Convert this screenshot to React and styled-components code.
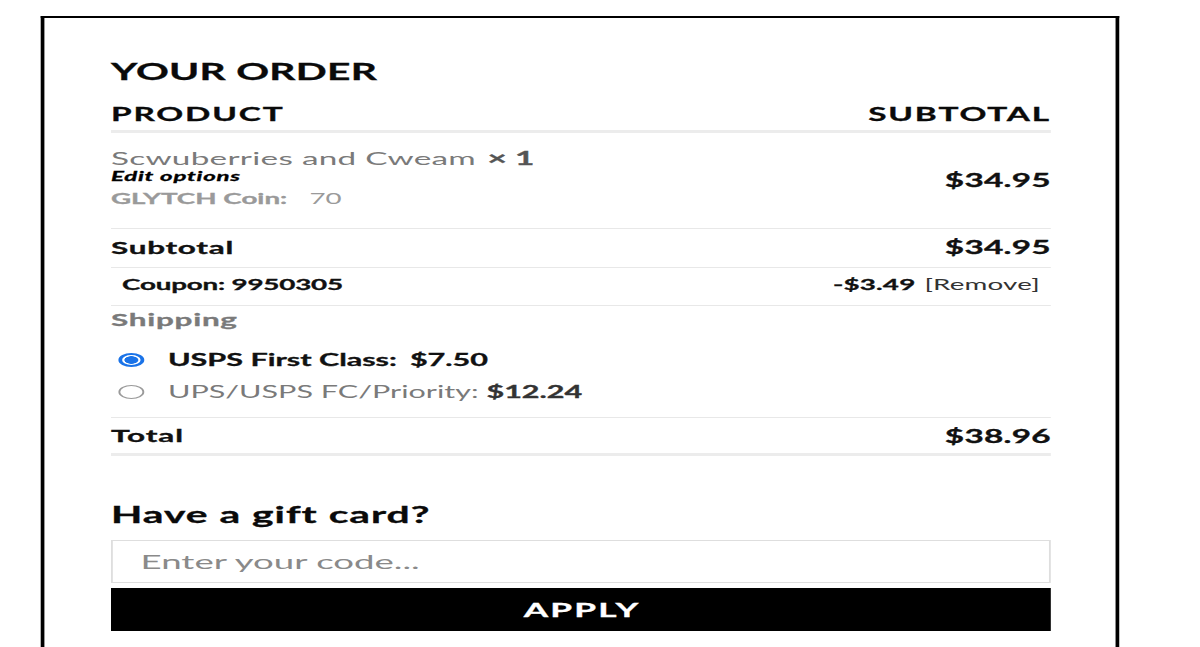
import styled, { createGlobalStyle, css } from 'styled-components';

// the reference is a horizontally stretched capture, so the card is
// laid out at its natural width and widened once as a whole
const STRETCH = 1.85;

const heavy = css`
  font-weight: 700;
  -webkit-text-stroke: 0.3px currentColor;
`;

const GlobalStyle = createGlobalStyle`
  html, body {
    margin: 0;
    padding: 0;
    background: #ffffff;
    overflow: hidden;
  }

  body {
    font-family: Lato, "Open Sans", sans-serif;
    color: #111111;
  }

  * {
    box-sizing: border-box;
  }
`;

const Stage = styled('div')`
  width: ${1200 / STRETCH}px;
  height: 647px;
  transform: scaleX(${STRETCH});
  transform-origin: 0 0;
`;

const Card = styled('section')`
  margin: 16px 0 0 ${41 / STRETCH}px;
  width: ${1079 / STRETCH}px;
  min-height: 700px;
  border: 2px solid #000000;
  border-bottom: none;
  padding: 41px ${1120 / STRETCH - 1051 / STRETCH - 2}px 40px
    ${111 / STRETCH - 41 / STRETCH - 2}px;
`;

const Title = styled('h3')`
  ${heavy};
  margin: 0;
  font-size: 22px;
  line-height: 1.2;
  letter-spacing: 0.15px;
  text-transform: uppercase;
  color: #0a0a0a;
`;

const Row = styled('div')`
  display: flex;
  align-items: center;
  justify-content: space-between;
  padding: ${(p) => p.$pad || '8px 0'};
  border-bottom: ${(p) => (p.$thick ? '3px solid #ececec' : '1px solid #e8e8e8')};
  font-size: ${(p) => p.$size || 17}px;
  line-height: 1.2;
`;

const HeadRow = styled(Row)`
  ${heavy};
  margin-top: 18.6px;
  letter-spacing: 1px;
  text-transform: uppercase;
  color: #0a0a0a;
`;

const Strong = styled('span')`
  ${heavy};
  letter-spacing: ${(p) => p.$track || 0}px;
  color: ${(p) => p.$color || '#111111'};
`;

const Price = styled('span')`
  ${heavy};
  font-size: 18px;
  letter-spacing: 0.15px;
  color: #111111;
`;

const ProductCell = styled('div')`
  display: flex;
  flex-direction: column;
  padding-bottom: 6px;
`;

const ProductName = styled('div')`
  font-size: 18px;
  line-height: 1.2;
  letter-spacing: 0.15px;
  color: #7a7a7a;

  b {
    ${heavy};
    margin-left: 1.5px;
    letter-spacing: 0;
    color: #555555;
  }
`;

const EditLink = styled('a')`
  ${heavy};
  font-size: 13px;
  line-height: 1.1;
  font-style: italic;
  letter-spacing: 0.4px;
  color: #000000;
  text-decoration: none;
`;

const Meta = styled('div')`
  margin-top: 5.3px;
  font-size: 15px;
  line-height: 1.24;
  color: #9a9a9a;

  b {
    ${heavy};
    margin-right: 12px;
  }
`;

const Remove = styled('a')`
  font-weight: 400;
  letter-spacing: 0.1px;
  color: #333333;
  text-decoration: none;
  margin-left: 1px;
`;

const Shipping = styled('div')`
  padding: 4px 0 9px;
  border-bottom: 1px solid #e8e8e8;
`;

const ShippingLabel = styled('div')`
  ${heavy};
  font-size: 17px;
  line-height: 1.2;
  letter-spacing: 0.4px;
  color: #7a7a7a;
`;

const Methods = styled('ul')`
  list-style: none;
  margin: 13.4px 0 0;
  padding: 0;
`;

const Method = styled('li')`
  line-height: 32px;
  font-size: 16.5px;
`;

const MethodLabel = styled('label')`
  display: flex;
  align-items: center;
  gap: 12.8px;
  padding-left: 4px;
  font-weight: ${(p) => (p.$active ? 700 : 400)};
  -webkit-text-stroke: ${(p) => (p.$active ? '0.3px currentColor' : '0')};
  color: ${(p) => (p.$active ? '#111111' : '#7a7a7a')};

  b {
    ${heavy};
    margin-left: ${(p) => (p.$active ? 3 : 0)}px;
    color: ${(p) => (p.$active ? '#111111' : '#333333')};
  }
`;

const Radio = styled('input')`
  appearance: none;
  margin: 0;
  width: 14px;
  height: 14px;
  border-radius: 50%;
  border: 1px solid #9a9a9a;
  background: #ffffff;

  &:checked {
    border: 2px solid #1a73e8;
    background: radial-gradient(circle, #1a73e8 0 3.5px, #ffffff 4px);
  }
`;

const GiftTitle = styled('h3')`
  ${heavy};
  margin: 45.6px 0 0;
  font-size: 22px;
  line-height: 1.2;
  letter-spacing: 0.55px;
  color: #0a0a0a;
`;

const CodeInput = styled('input')`
  display: block;
  width: 100%;
  height: 43px;
  margin-top: 11.6px;
  padding: 0 15px;
  border: 1px solid #dedede;
  font-family: Lato, sans-serif;
  font-size: 19.8px;
  color: #333333;
  outline: none;

  &::placeholder {
    color: #8a8a8a;
  }
`;

const ApplyButton = styled('button')`
  ${heavy};
  display: block;
  width: 100%;
  height: 43px;
  margin-top: 5px;
  padding: 0 0 0 1.2px;
  border: none;
  background: #000000;
  color: #ffffff;
  font-family: Lato, sans-serif;
  font-size: 19px;
  letter-spacing: 1.2px;
  text-transform: uppercase;
  cursor: pointer;
`;

const order = {
  product: 'Scwuberries and Cweam',
  qty: 1,
  coin: 70,
  price: '$34.95',
  subtotal: '$34.95',
  coupon: '9950305',
  discount: '-$3.49',
  total: '$38.96',
  shipping: [
    { id: 'usps', name: 'USPS First Class:', cost: '$7.50', active: true },
    { id: 'ups', name: 'UPS/USPS FC/Priority:', cost: '$12.24', active: false },
  ],
};

export default function App() {
  return (
    <>
      <GlobalStyle />
      <Stage>
        <Card>
          <Title>Your order</Title>

          <HeadRow $thick $size={18} $pad="0 0 4px">
            <span>Product</span>
            <span>Subtotal</span>
          </HeadRow>

          <Row $pad="15px 0">
            <ProductCell>
              <ProductName>
                {order.product} <b>× {order.qty}</b>
              </ProductName>
              <EditLink href="#">Edit options</EditLink>
              <Meta>
                <b>GLYTCH Coin:</b>
                {order.coin}
              </Meta>
            </ProductCell>
            <Price>{order.price}</Price>
          </Row>

          <Row>
            <Strong $track={0.4}>Subtotal</Strong>
            <Price>{order.subtotal}</Price>
          </Row>

          <Row $size={15} $pad="7px 6px 12.5px">
            <Strong $track={-0.1}>Coupon: {order.coupon}</Strong>
            <span>
              <Strong $track={0.1}>{order.discount}</Strong> <Remove href="#">[Remove]</Remove>
            </span>
          </Row>

          <Shipping>
            <ShippingLabel>Shipping</ShippingLabel>
            <Methods>
              {order.shipping.map((m) => (
                <Method key={m.id}>
                  <MethodLabel $active={m.active}>
                    <Radio type="radio" name="shipping" defaultChecked={m.active} />
                    <span>
                      {m.name} <b>{m.cost}</b>
                    </span>
                  </MethodLabel>
                </Method>
              ))}
            </Methods>
          </Shipping>

          <Row $thick $pad="7.4px 0 6px">
            <Strong $track={0.5}>Total</Strong>
            <Price>{order.total}</Price>
          </Row>

          <GiftTitle>Have a gift card?</GiftTitle>
          <CodeInput type="text" placeholder="Enter your code..." />
          <ApplyButton type="button">Apply</ApplyButton>
        </Card>
      </Stage>
    </>
  );
}
